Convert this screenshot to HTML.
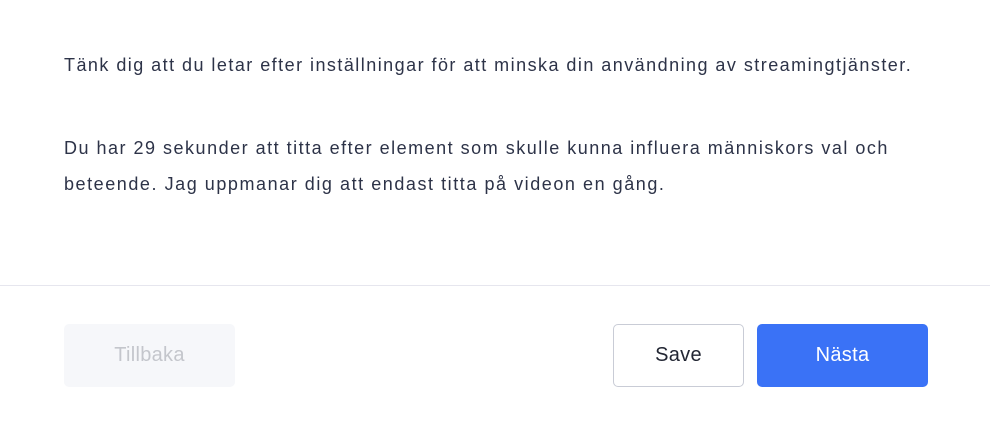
<!DOCTYPE html>
<html><head><meta charset="utf-8"><style>
html,body{margin:0;padding:0;background:#fff;width:990px;height:422px;overflow:hidden;font-family:"Liberation Sans",sans-serif;}
.t{position:absolute;left:64px;font-size:18px;color:#2d3348;white-space:nowrap;line-height:20px}
.hr{position:absolute;left:0;top:285px;width:990px;height:1px;background:#e6e6ee}
.b{position:absolute;top:324px;height:63px;border-radius:5px;box-sizing:border-box;display:flex;align-items:center;justify-content:center;font-size:20px;letter-spacing:0.3px}
</style></head><body>
<div class="t" style="top:55px;letter-spacing:1.46px">Tänk dig att du letar efter inställningar för att minska din användning av streamingtjänster.</div>
<div class="t" style="top:138px;letter-spacing:1.5px">Du har 29 sekunder att titta efter element som skulle kunna influera människors val och</div>
<div class="t" style="top:174px;letter-spacing:1.55px">beteende. Jag uppmanar dig att endast titta på videon en gång.</div>
<div class="hr"></div>
<div class="b" style="left:64px;width:171px;background:#f6f7fa;color:#c4c6cc">Tillbaka</div>
<div class="b" style="left:613px;width:131px;border:1px solid #c9ccd6;color:#222633">Save</div>
<div class="b" style="left:757px;width:171px;background:#3a72f6;color:#fff">Nästa</div>
</body></html>
